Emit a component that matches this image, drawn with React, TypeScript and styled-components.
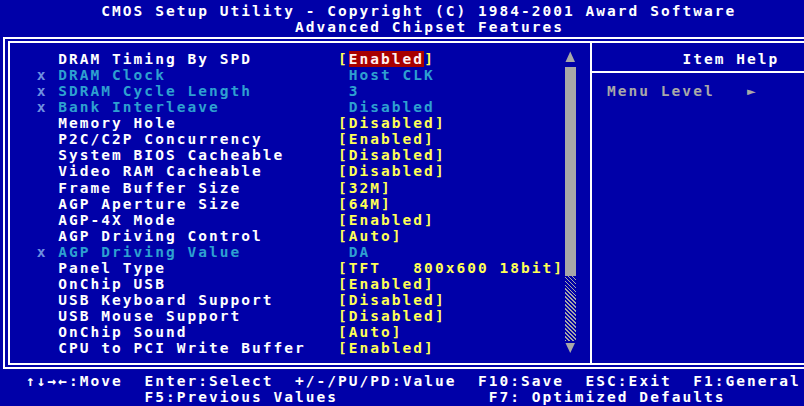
import styled, { createGlobalStyle } from 'styled-components';

// text-mode cell metrics
const CW = 10.76;
const RH = 16.1;
const X0 = 4.5;
const FONT = 14.5;
const col = (n: number) => X0 + n * CW;

const BLUE = '#0000a8';
const WHITE = '#ffffff';
const YELLOW = '#ffff55';
const GRAY = '#a8a8a8';
const DIM = '#2ea0d0';

type Item = {
  name: string;
  value: string;
  locked?: boolean;
  selected?: boolean;
};

const items: Item[] = [
  { name: 'DRAM Timing By SPD', value: 'Enabled', selected: true },
  { name: 'DRAM Clock', value: ' Host CLK', locked: true },
  { name: 'SDRAM Cycle Length', value: ' 3', locked: true },
  { name: 'Bank Interleave', value: ' Disabled', locked: true },
  { name: 'Memory Hole', value: '[Disabled]' },
  { name: 'P2C/C2P Concurrency', value: '[Enabled]' },
  { name: 'System BIOS Cacheable', value: '[Disabled]' },
  { name: 'Video RAM Cacheable', value: '[Disabled]' },
  { name: 'Frame Buffer Size', value: '[32M]' },
  { name: 'AGP Aperture Size', value: '[64M]' },
  { name: 'AGP-4X Mode', value: '[Enabled]' },
  { name: 'AGP Driving Control', value: '[Auto]' },
  { name: 'AGP Driving Value', value: ' DA', locked: true },
  { name: 'Panel Type', value: '[TFT   800x600 18bit]' },
  { name: 'OnChip USB', value: '[Enabled]' },
  { name: 'USB Keyboard Support', value: '[Disabled]' },
  { name: 'USB Mouse Support', value: '[Disabled]' },
  { name: 'OnChip Sound', value: '[Auto]' },
  { name: 'CPU to PCI Write Buffer', value: '[Enabled]' },
];

function Arrow({ down }: { down?: boolean }) {
  return (
    <svg width="10.5" height={RH} viewBox={`0 0 10.5 ${RH}`}>
      {down ? (
        <polygon points="0.5,2 10,2 5.25,12" fill={GRAY} />
      ) : (
        <polygon points="5.25,0.5 10,11 0.5,11" fill={GRAY} />
      )}
    </svg>
  );
}

function App() {
  return (
    <>
      <GlobalStyle />
      <Screen>
        <Line $col={9}>CMOS Setup Utility - Copyright (C) 1984-2001 Award Software</Line>
        <Line $col={27}>Advanced Chipset Features</Line>

        <Frame>
          <ListPane>
            <ItemList>
              {items.map((item) => (
                <ItemRow key={item.name}>
                  <Marker>{item.locked ? 'x' : ''}</Marker>
                  <Name $locked={item.locked}>{item.name}</Name>
                  <Value $locked={item.locked}>
                    {item.selected ? (
                      <>
                        [<Selected>{item.value}</Selected>]
                      </>
                    ) : (
                      item.value
                    )}
                  </Value>
                </ItemRow>
              ))}
            </ItemList>
            <ScrollBar>
              <Arrow />
              <Thumb />
              <Track />
              <Arrow down />
            </ScrollBar>
          </ListPane>

          <HelpPane>
            <HelpTitle>Item Help</HelpTitle>
            <HelpDivider />
            <HelpText>Menu Level   ►</HelpText>
          </HelpPane>
        </Frame>

        <Line $col={2}>↑↓→←:Move  Enter:Select  +/-/PU/PD:Value  F10:Save  ESC:Exit  F1:General</Line>
        <Line $col={13}>F5:Previous Values              F7: Optimized Defaults</Line>
      </Screen>
    </>
  );
}

export default App;

const GlobalStyle = createGlobalStyle`
  html, body {
    margin: 0;
    padding: 0;
    background: ${BLUE};
  }
`;

const Screen = styled.div`
  box-sizing: border-box;
  width: 804px;
  height: 406px;
  padding-top: 2.5px;
  overflow: hidden;
  background: ${BLUE};
  color: ${WHITE};
  font-family: 'DejaVu Sans Mono', monospace;
  font-weight: bold;
  font-size: ${FONT}px;
  letter-spacing: ${CW - FONT * 0.602}px;
  line-height: ${RH}px;
  white-space: pre;
`;

const Line = styled.div<{ $col: number }>`
  height: ${RH}px;
  padding-left: ${({ $col }) => col($col)}px;
`;

const Frame = styled.div`
  display: flex;
  width: 850px;
  height: 320px;
  margin: 2.3px 0 3.8px 3px;
  border-top: 6px double ${WHITE};
  border-bottom: 6px double ${WHITE};
  border-left: 7px double ${WHITE};
  border-right: 7px double ${WHITE};
`;

const ListPane = styled.div`
  display: flex;
  flex-shrink: 0;
  width: 580px;
  padding-top: 7.8px;
  border-right: 2px solid ${WHITE};
`;

const ItemList = styled.div`
  box-sizing: border-box;
  width: 555px;
  padding-left: ${col(3) - 10}px;
`;

const ItemRow = styled.div`
  display: grid;
  grid-template-columns: ${2 * CW}px ${26 * CW}px auto;
  height: ${RH}px;
`;

const Marker = styled.span`
  color: #6f8fe0;
`;

const Name = styled.span<{ $locked?: boolean }>`
  color: ${({ $locked }) => ($locked ? DIM : WHITE)};
`;

const Value = styled.span<{ $locked?: boolean }>`
  color: ${({ $locked }) => ($locked ? DIM : YELLOW)};
`;

const Selected = styled.span`
  display: inline-block;
  height: ${RH}px;
  background: #a80000;
  color: #fff0f0;
`;

const ScrollBar = styled.div`
  display: flex;
  flex-direction: column;
  width: 10.5px;
`;

const Thumb = styled.div`
  height: ${13 * RH}px;
  background: ${GRAY};
`;

const Track = styled.div`
  height: ${4 * RH}px;
  background: repeating-linear-gradient(
    45deg,
    ${GRAY} 0 1.1px,
    ${BLUE} 1.1px 2.8px
  );
`;

const HelpPane = styled.div`
  flex: 1;
  padding-top: 7.8px;
`;

const HelpTitle = styled.div`
  height: ${RH}px;
  padding-left: ${col(63) - 592}px;
`;

const HelpDivider = styled.div`
  height: 2px;
  margin: 4.1px 0 10px;
  background: ${WHITE};
`;

const HelpText = styled.div`
  height: ${RH}px;
  padding-left: ${col(56) - 592}px;
  color: ${GRAY};
`;
